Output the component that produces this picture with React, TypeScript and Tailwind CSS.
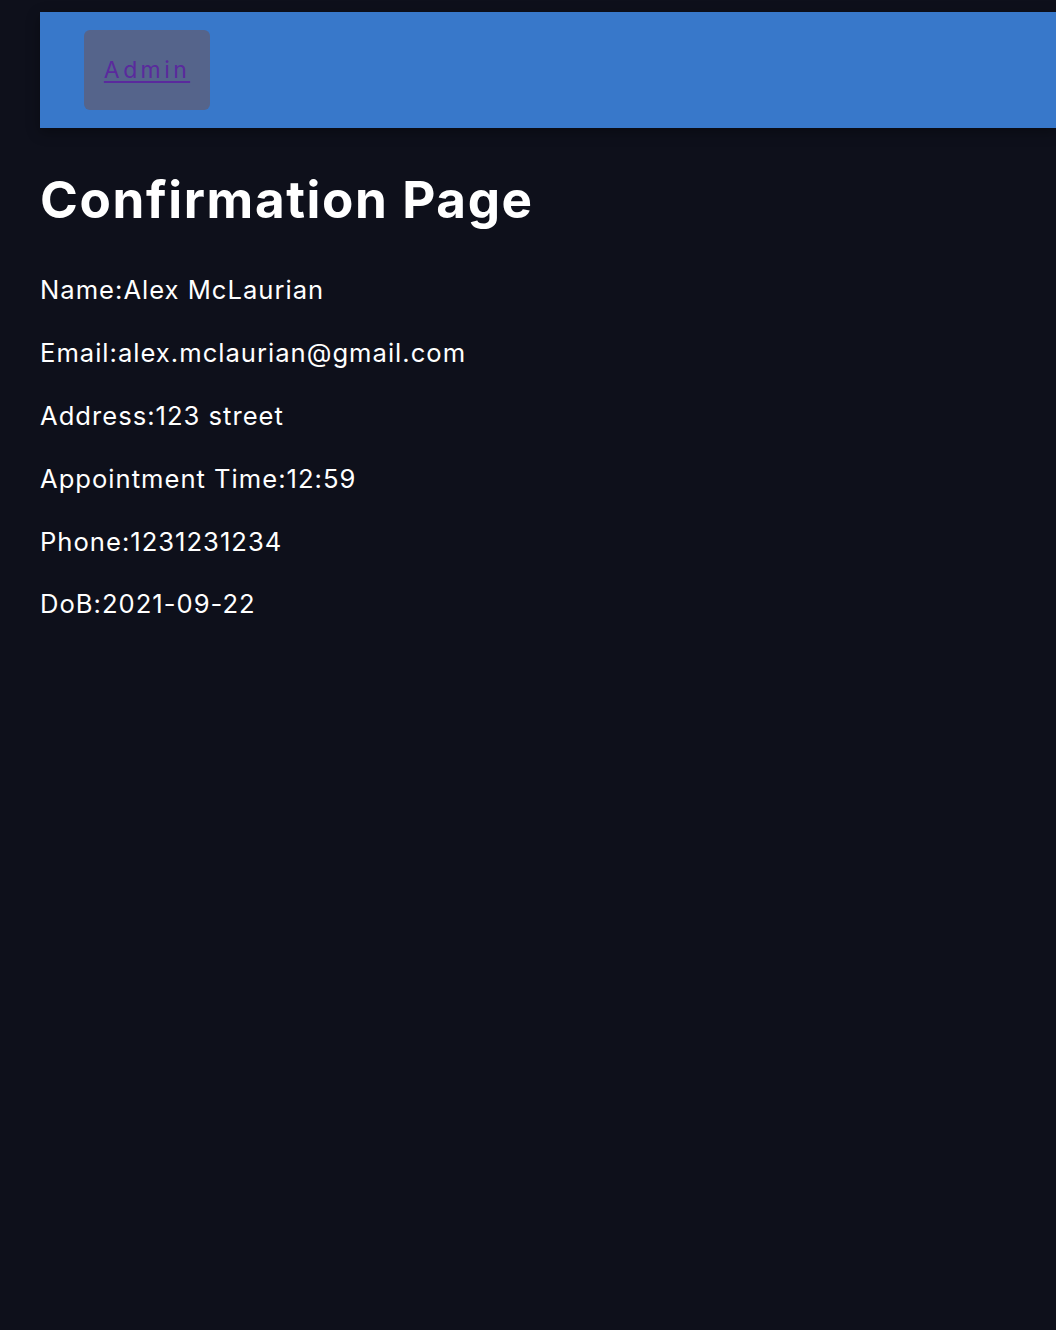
const fields = [
  { label: 'Name', value: 'Alex McLaurian' },
  { label: 'Email', value: 'alex.mclaurian@gmail.com' },
  { label: 'Address', value: '123 street' },
  { label: 'Appointment Time', value: '12:59' },
  { label: 'Phone', value: '1231231234' },
  { label: 'DoB', value: '2021-09-22' },
];

export default function App() {
  return (
    <div className="min-h-[1330px] bg-[#0e101b] font-['Inter',sans-serif] text-white">
      <nav className="ml-[40px] pt-[12px]">
        <div className="flex h-[116px] items-start bg-[#3878ca] pl-[44px] pt-[18px] shadow-[0_4px_12px_rgba(0,0,0,0.35)]">
          <a
            className="flex h-[80px] w-[126px] items-center justify-center rounded-[6px] bg-[#55648b] text-[23px] tracking-[3.4px] text-[#5a2a9d] underline underline-offset-[3px]"
            href="#"
          >
            Admin
          </a>
        </div>
      </nav>

      <main className="px-[40px]">
        <h1 className="mt-[43px] text-[51.2px] font-bold leading-[1.1] tracking-[1.6px]">Confirmation Page</h1>
        <div className="mt-[44px] flex flex-col gap-[25.6px]">
          {fields.map((f) => (
            <p className="text-[25.6px] leading-[37.2px] tracking-[1px]" key={f.label}>
              {f.label}:{f.value}
            </p>
          ))}
        </div>
      </main>
    </div>
  );
}
